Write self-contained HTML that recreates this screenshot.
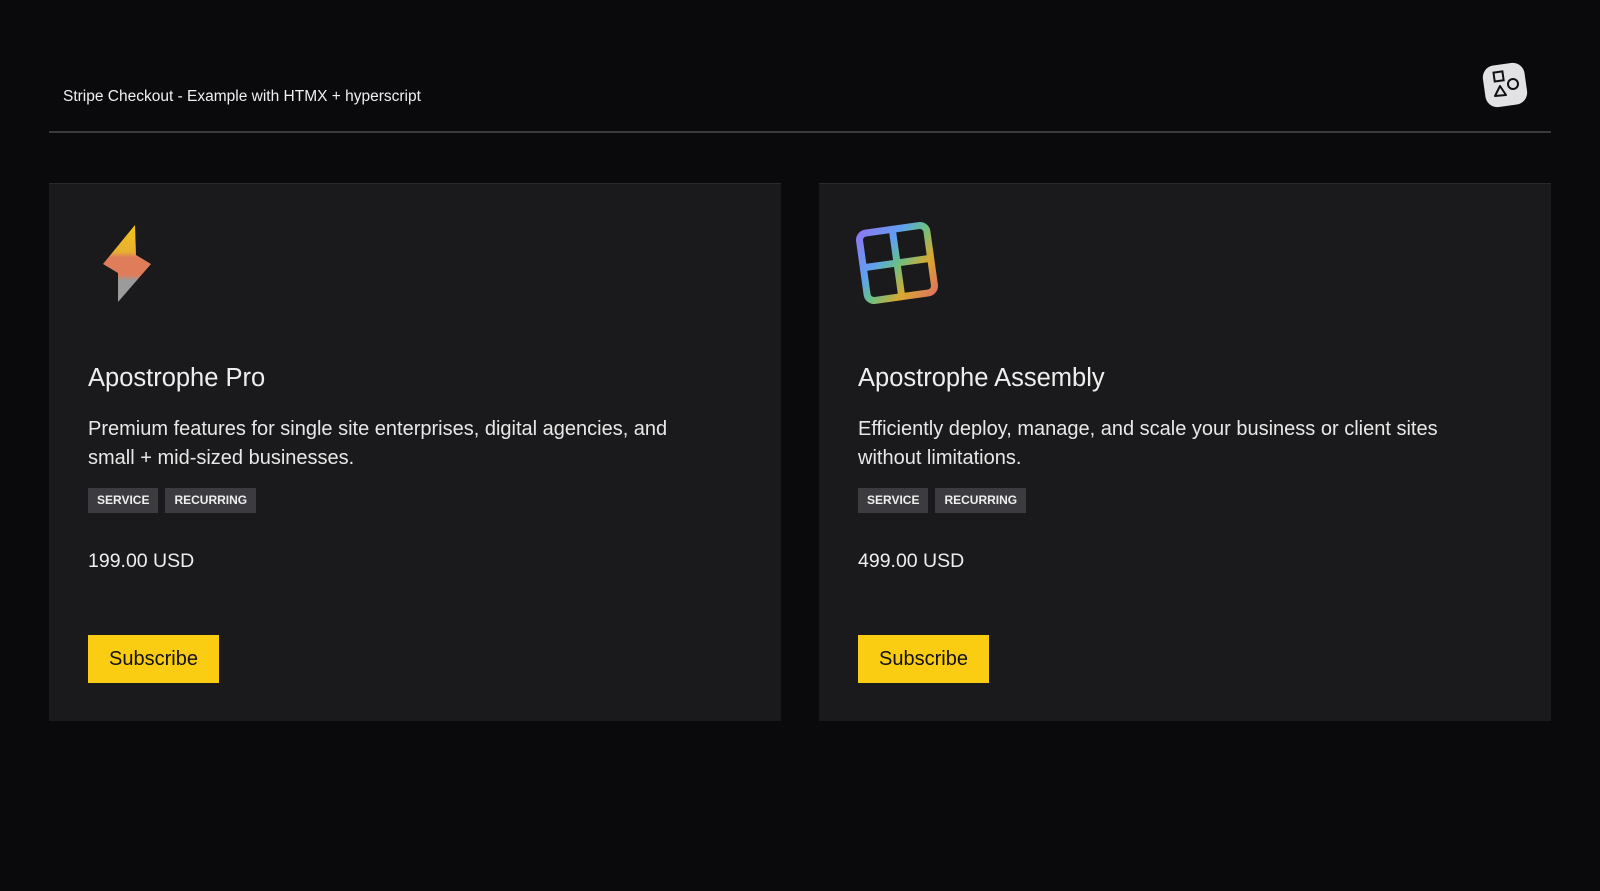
<!DOCTYPE html>
<html><head><meta charset="utf-8"><style>
*{margin:0;padding:0;box-sizing:border-box}
body{width:1600px;height:891px;background:#0a0a0c;font-family:"Liberation Sans",sans-serif;color:#e6e6e6;position:relative;overflow:hidden}
.hdr{position:absolute;left:63px;top:88px;font-size:15.5px;color:#f0f0f0}
.line{position:absolute;left:49px;top:131px;width:1502px;height:2px;background:#3a3a3d}
.card{position:absolute;top:183px;width:732px;height:538px;background:#1a1a1c;border-top:1px solid #2a2a2d}
.card .in{position:absolute;left:39px;top:0;right:39px}
h2{position:absolute;top:180px;font-weight:normal;font-size:25.5px;color:#eee}
.desc{position:absolute;top:231px;font-size:20px;line-height:29px;color:#e8e8e8;width:610px}
.tags{position:absolute;top:304px;display:flex;gap:7px}
.tag{background:#3c3c40;color:#eee;font-weight:bold;font-size:12px;height:25px;line-height:25px;padding:0 9px}
.price{position:absolute;top:366px;font-size:19.5px;color:#eee}
.btn{position:absolute;top:451px;width:131px;height:48px;background:#fbcd12;color:#111;font-size:20px;line-height:48px;text-align:center}
.icon{position:absolute}
</style></head><body>
<div class="hdr">Stripe Checkout - Example with HTMX + hyperscript</div>
<svg style="position:absolute;left:1482px;top:62px" width="46" height="46" viewBox="0 0 46 46">
<rect x="2" y="2" width="42" height="42" rx="12" fill="#e2e2e4" transform="rotate(-8 23 23)"/>
<rect x="12" y="10" width="9" height="9" fill="none" stroke="#111" stroke-width="2" transform="rotate(-8 16 14)"/>
<circle cx="31" cy="22" r="5" fill="none" stroke="#111" stroke-width="2"/>
<path d="M18 24 L24 33 L13 34 Z" fill="none" stroke="#111" stroke-width="2" stroke-linejoin="round"/>
</svg>
<div class="line"></div>

<div class="card" style="left:49px"><div class="in">
<svg class="icon" width="80" height="90" viewBox="88 220 80 90" style="left:0;top:37px">
<defs><linearGradient id="g1" x1="0" y1="0" x2="0" y2="1"><stop offset="0" stop-color="#f2c51a"/><stop offset="0.35" stop-color="#e8b030"/><stop offset="0.42" stop-color="#df7d5a"/><stop offset="0.65" stop-color="#df7d5a"/><stop offset="0.72" stop-color="#9b9b9b"/><stop offset="1" stop-color="#9b9b9b"/></linearGradient></defs>
<polygon points="135,224 136,254 151,263 118,301 118,272 103,263" fill="url(#g1)"/>
</svg>
<h2>Apostrophe Pro</h2>
<div class="desc">Premium features for single site enterprises, digital agencies, and small + mid-sized businesses.</div>
<div class="tags"><span class="tag">SERVICE</span><span class="tag">RECURRING</span></div>
<div class="price">199.00 USD</div>
<div class="btn">Subscribe</div>
</div></div>

<div class="card" style="left:819px"><div class="in">
<svg class="icon" width="82" height="82" viewBox="0 0 82 82" style="left:-2px;top:38px">
<defs><linearGradient id="g2" gradientUnits="userSpaceOnUse" x1="0" y1="0" x2="82" y2="82"><stop offset="0" stop-color="#9a6cf0"/><stop offset="0.35" stop-color="#5fa0f0"/><stop offset="0.5" stop-color="#66c08a"/><stop offset="0.7" stop-color="#d9a830"/><stop offset="1" stop-color="#e06070"/></linearGradient></defs>
<g transform="rotate(-8 41 41)" fill="none" stroke="url(#g2)" stroke-width="7">
<rect x="7" y="7" width="68" height="68" rx="7"/>
<line x1="41" y1="7" x2="41" y2="75"/><line x1="7" y1="41" x2="75" y2="41"/>
</g></svg>
<h2>Apostrophe Assembly</h2>
<div class="desc">Efficiently deploy, manage, and scale your business or client sites without limitations.</div>
<div class="tags"><span class="tag">SERVICE</span><span class="tag">RECURRING</span></div>
<div class="price">499.00 USD</div>
<div class="btn">Subscribe</div>
</div></div>
</body></html>
